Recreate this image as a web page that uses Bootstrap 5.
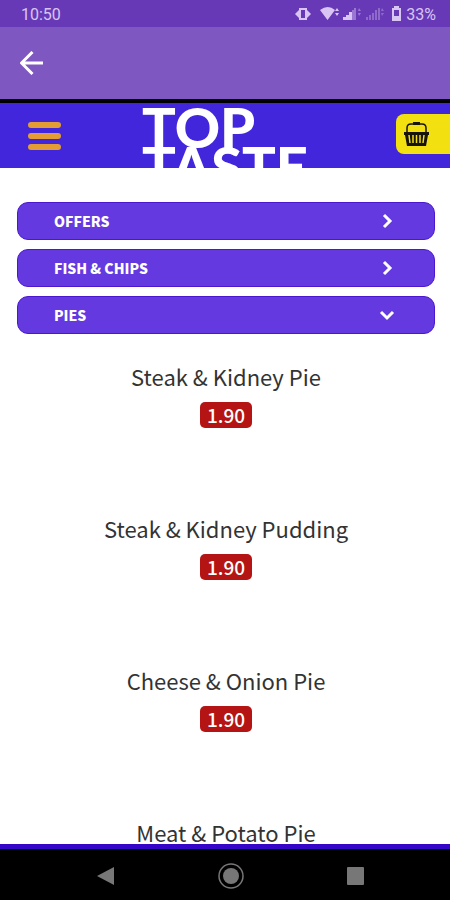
<!DOCTYPE html>
<html lang="en">
<head>
<meta charset="utf-8">
<meta name="viewport" content="width=device-width, initial-scale=1">
<title>Top Taste</title>
<link href="https://cdn.jsdelivr.net/npm/bootstrap@5.3.0/dist/css/bootstrap.min.css" rel="stylesheet">
<style>
body{font-family:"Noto Sans CJK SC","Noto Sans",sans-serif;background:#fff}
.status-bar{background:#6739b6;color:#d9c5f3;height:27px;padding:1px 14px 0 21px;font:400 16px/27px Roboto,sans-serif}
.app-bar{background:#7e57c0;height:72px;padding:0 20px}
.site-head{background:#4126dc;border-top:4px solid #000;height:69px}
.burger{margin-left:28px;width:33px;height:30px}
.brand{color:#fff;font:900 56px/39px Lato,sans-serif;top:4px;left:142px}
.brand:hover{color:#fff}
.basket{background:#f2e010;width:54px;height:40px;border-radius:8px 0 0 8px;padding-left:7px;margin-bottom:4px}
.menu-area{overflow-y:auto;scrollbar-width:none;padding:34px 15px 0 17px}
.menu-area::-webkit-scrollbar{display:none}
.category{background:#6439e0;border:1px solid #4c18cf;border-radius:11px;height:38px;padding:0 39px 0 36px;color:#fff;font-weight:900;font-size:14px;line-height:20px;margin-bottom:9px}
.dish{height:152px;padding-top:20px;color:#333}
.dish:last-child{height:auto}
.dish h2{font-size:22px;line-height:26px;font-weight:400;margin-bottom:13px}
.price{background:#b51414;color:#fff;border-radius:5px;width:52px;height:26px;font-size:19px;font-weight:500;line-height:26px}
.sys-nav{border-top:5px solid #3505c8;background:#000;height:56px;padding:3px 82px 0 93px}
</style>
</head>
<body>
<div class="vh-100 d-flex flex-column overflow-hidden">
  <div class="status-bar d-flex justify-content-between flex-shrink-0">
    <span>10:50</span>
    <div class="d-flex align-items-center">
      <svg width="108" height="20" viewBox="0 0 108 20" fill="#d9c5f3" aria-hidden="true">
        <path fill-rule="evenodd" d="M1 10 5 6V4h8v2l4 4-4 4v2H5v-2zM7 6v8h4V6z"/>
        <path d="M26 6q8-6 15 0l-7.500 10zM41 7l2-3 2 3zM41 9h4l-2 3z"/>
        <path d="M49 13h3v3h-3zM52 11h3v5h-3zM55 8h3v8h-3z"/><path opacity=".45" d="M58 6h2v10h-2zM60 4h2v12h-2zM64 7l1-3 2 3zM64 9h3l-2 3z"/>
        <path opacity=".35" d="M72 13h2v3h-2zM75 11h2v5h-2zM78 9h2v7h-2zM81 6h2v10h-2zM84 4h2v12h-2zM87 7l1-3 2 3zM87 9h3l-2 3z"/>
        <path fill-rule="evenodd" d="M98 4h2V2h5v2h2v13h-9zM100 6v6h5V6z"/>
      </svg>
      <span class="ms-1">33%</span>
    </div>
  </div>
  <div class="app-bar d-flex align-items-center flex-shrink-0">
    <button type="button" class="btn p-0 border-0 d-flex" aria-label="Back">
      <svg width="24" height="24" viewBox="0 0 24 24" fill="none" stroke="#fff" stroke-width="3"><path d="M23 12H2M12.500 1 1.500 12 12.500 23"/></svg>
    </button>
  </div>
  <header class="site-head position-relative d-flex align-items-center justify-content-between flex-shrink-0">
    <button type="button" class="btn burger p-0 border-0 d-flex" aria-label="Menu">
      <svg width="33" height="30" viewBox="0 0 33 30" stroke="#e49c35" stroke-width="6" stroke-linecap="round"><path d="M3 4h27M3 15h27M3 26h27"/></svg>
    </button>
    <a href="#" class="brand position-absolute text-decoration-none">TOP<br>TASTE</a>
    <button type="button" class="btn basket border-0 rounded-end-0 d-flex align-items-center py-0 pe-0" aria-label="Basket">
      <svg width="27" height="26" viewBox="0 0 27 26"><path d="M4 11V7q0-4 4-4h11q4 0 4 4v4" fill="none" stroke="#17140a" stroke-width="1.500"/><path d="M10 1h7v3h-7zM1 11h25v3h-1l-2 11H4L2 14H1z" fill="#17140a"/><path d="M6 14l1 8M10 14v8M13.500 14v8M17 14v8M21 14l-1 8" stroke="#f2e010" stroke-width="1.500"/></svg>
    </button>
  </header>
  <main class="menu-area flex-grow-1">
    <button type="button" class="category btn w-100 d-flex align-items-center justify-content-between" aria-expanded="false"><span>OFFERS</span>
      <svg width="16" height="16" viewBox="0 0 16 16" fill="none" stroke="#fff" stroke-width="3"><path d="m5 2 6 6-6 6"/></svg></button>
    <button type="button" class="category btn w-100 d-flex align-items-center justify-content-between" aria-expanded="false"><span>FISH &amp; CHIPS</span>
      <svg width="16" height="16" viewBox="0 0 16 16" fill="none" stroke="#fff" stroke-width="3"><path d="m5 2 6 6-6 6"/></svg></button>
    <button type="button" class="category btn w-100 d-flex align-items-center justify-content-between" aria-expanded="true"><span>PIES</span>
      <svg width="16" height="16" viewBox="0 0 16 16" fill="none" stroke="#fff" stroke-width="3"><path d="m2 5 6 6 6-6"/></svg></button>
    <section class="text-center">
      <article class="dish"><h2>Steak &amp; Kidney Pie</h2><div class="price mx-auto">1.90</div></article>
      <article class="dish"><h2>Steak &amp; Kidney Pudding</h2><div class="price mx-auto">1.90</div></article>
      <article class="dish"><h2>Cheese &amp; Onion Pie</h2><div class="price mx-auto">1.90</div></article>
      <article class="dish"><h2>Meat &amp; Potato Pie</h2></article>
    </section>
  </main>
  <nav class="sys-nav d-flex align-items-center justify-content-between flex-shrink-0" aria-label="System">
    <button type="button" class="btn p-0 border-0 d-flex" aria-label="Back"><svg width="26" height="26" viewBox="0 0 26 26"><path d="M21 4v18L4 13z" fill="#777"/></svg></button>
    <button type="button" class="btn p-0 border-0 d-flex" aria-label="Home"><svg width="26" height="26" viewBox="0 0 26 26"><circle cx="13" cy="13" r="8" fill="#777"/><circle cx="13" cy="13" r="12" fill="none" stroke="#777" stroke-width="1.500"/></svg></button>
    <button type="button" class="btn p-0 border-0 d-flex" aria-label="Recent apps"><svg width="26" height="26" viewBox="0 0 26 26"><rect x="5" y="4" width="17" height="18" rx="1" fill="#777"/></svg></button>
  </nav>
</div>
<script src="https://cdn.jsdelivr.net/npm/bootstrap@5.3.0/dist/js/bootstrap.bundle.min.js"></script>
</body>
</html>
